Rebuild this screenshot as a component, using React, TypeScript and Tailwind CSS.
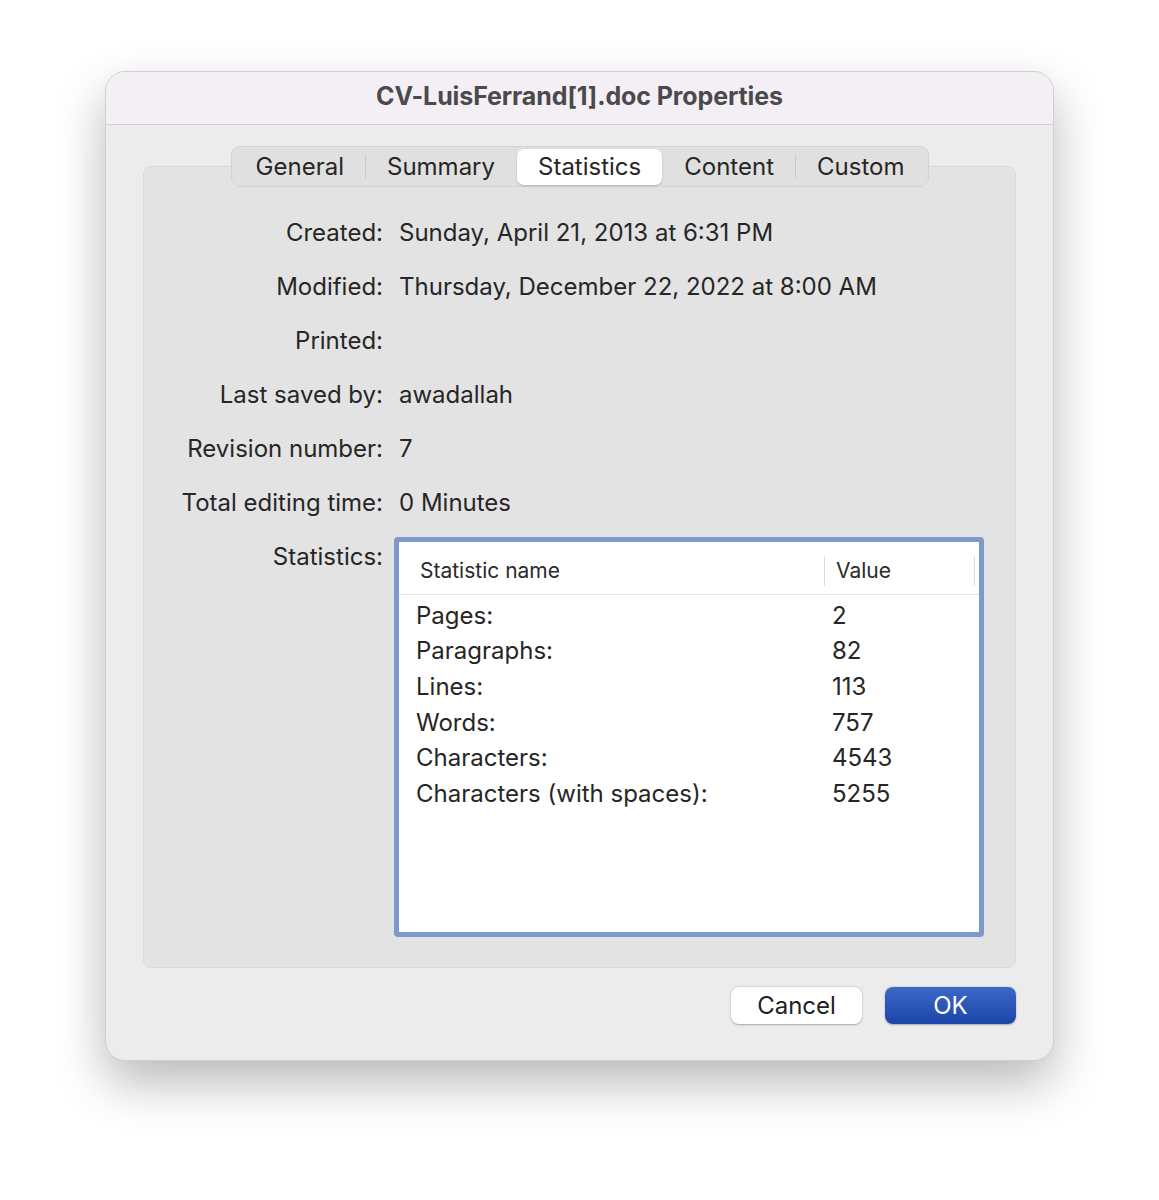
const fields: [string, string][] = [
  ['Created:', 'Sunday, April 21, 2013 at 6:31 PM'],
  ['Modified:', 'Thursday, December 22, 2022 at 8:00 AM'],
  ['Printed:', ''],
  ['Last saved by:', 'awadallah'],
  ['Revision number:', '7'],
  ['Total editing time:', '0 Minutes'],
];

const stats: [string, string][] = [
  ['Pages:', '2'],
  ['Paragraphs:', '82'],
  ['Lines:', '113'],
  ['Words:', '757'],
  ['Characters:', '4543'],
  ['Characters (with spaces):', '5255'],
];

const tabs = ['General', 'Summary', 'Statistics', 'Content', 'Custom'];

const App = () => {
  return (
    <div className="w-[1159px] h-[1200px] bg-white font-['Inter','Liberation_Sans',sans-serif] text-[#262626]">
      <div className="pt-[71px] pl-[105px]">
        <div className="w-[949px] h-[990px] rounded-[20px] bg-[#ececec] border border-[#cfcfcf] shadow-[0_22px_50px_rgba(0,0,0,0.28)] overflow-hidden flex flex-col">
          <div className="h-[53px] shrink-0 bg-[#f3eff5] border-b border-[#d2d0d3] flex items-center justify-center">
            <span className="text-[25px] font-bold text-[#4a4a4c] tracking-[-0.1px] -mt-[2px]">
              CV-LuisFerrand[1].doc Properties
            </span>
          </div>

          <div className="relative mx-[37px] mt-[41px] h-[802px] rounded-[8px] bg-[#e3e3e3] border border-[#d9d9d9]">
            <div className="absolute -top-[21px] left-[87px] w-[698px] h-[41px] rounded-[9px] bg-[#e0e0e0] border border-[#d3d3d3] flex items-center justify-center">
              {tabs.map((t, i) => {
                const active = t === 'Statistics';
                const prevActive = i > 0 && tabs[i - 1] === 'Statistics';
                return (
                  <div key={t} className="flex items-center">
                    {i > 0 && (
                      <div
                        className={
                          active || prevActive
                            ? 'w-px h-[22px] bg-transparent'
                            : 'w-px h-[22px] bg-[#c8c8c8]'
                        }
                      />
                    )}
                    <div
                      className={
                        active
                          ? 'h-[36px] px-[21px] rounded-[7px] bg-white shadow-[0_1px_2px_rgba(0,0,0,0.2)] flex items-center text-[24px]'
                          : 'h-[36px] px-[21px] flex items-center text-[24px]'
                      }
                    >
                      {t}
                    </div>
                  </div>
                );
              })}
            </div>

            <div className="pt-[39px] flex flex-col">
              {fields.map(([label, value]) => (
                <div key={label} className="flex h-[54px] items-center text-[24px]">
                  <div className="w-[239px] text-right">{label}</div>
                  <div className="pl-[16px]">{value}</div>
                </div>
              ))}
              <div className="flex text-[24px]">
                <div className="w-[239px] h-[54px] flex items-center justify-end">Statistics:</div>
                <div className="ml-[11px] mt-[7px] w-[590px] h-[400px] rounded-[4px] border-[5px] border-[#7e99ca] bg-white">
                  <div className="flex h-[53px] pt-[6px] items-center border-b border-[#e2e2e2] text-[21px] text-[#2b2b2b]">
                    <div className="w-[426px] pl-[21px] h-[30px] flex items-center border-r border-[#dcdcdc]">
                      Statistic name
                    </div>
                    <div className="w-[150px] pl-[11px] h-[30px] flex items-center border-r border-[#dcdcdc]">
                      Value
                    </div>
                  </div>
                  <div className="pt-[3px]">
                    {stats.map(([name, val]) => (
                      <div key={name} className="flex h-[35.6px] items-center text-[24px]">
                        <div className="w-[433px] pl-[17px]">{name}</div>
                        <div>{val}</div>
                      </div>
                    ))}
                  </div>
                </div>
              </div>
            </div>
          </div>

          <div className="flex justify-end gap-[23px] mr-[37px] mt-[19px]">
            <button className="w-[131px] h-[37px] rounded-[8px] bg-white shadow-[0_0.5px_2px_rgba(0,0,0,0.3)] text-[24px] text-[#1f1f1f]">
              Cancel
            </button>
            <button className="w-[131px] h-[37px] rounded-[8px] bg-gradient-to-b from-[#3d68c6] to-[#1b45a9] shadow-[0_0.5px_2px_rgba(0,0,0,0.3)] text-[24px] text-white">
              OK
            </button>
          </div>
        </div>
      </div>
    </div>
  );
};

export default App;
